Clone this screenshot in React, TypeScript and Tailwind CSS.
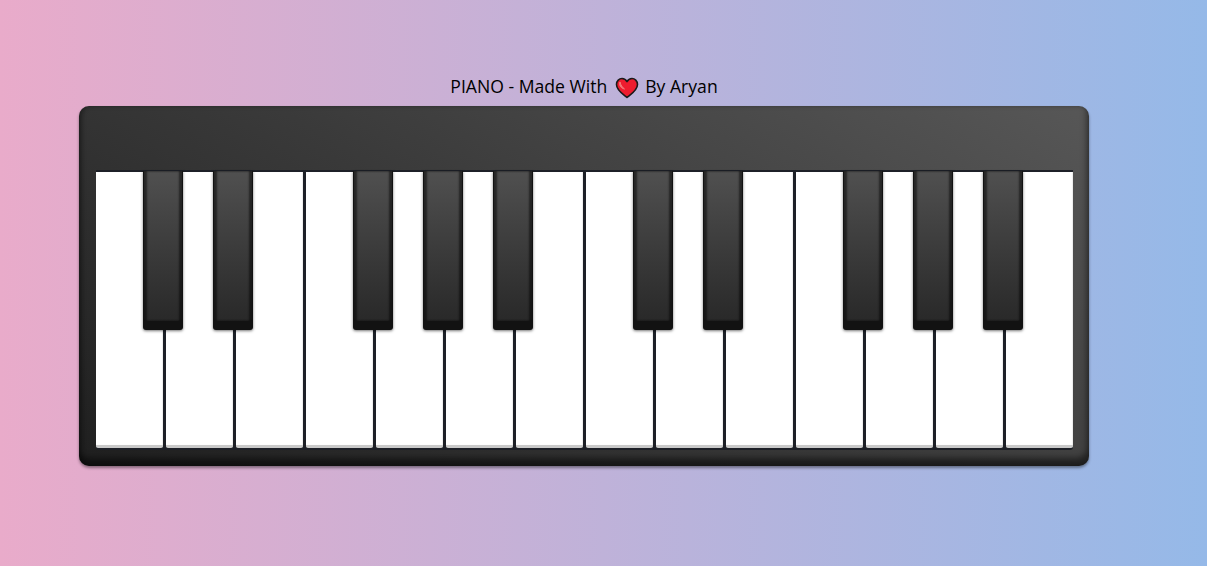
import React from 'react';

// true = this white key has a black key on its right edge
const whiteKeys = [true, true, false, true, true, true, false, true, true, false, true, true, true, false];

function Heart() {
    return (
        <svg width="24" height="22" viewBox="0 0 24 22" className="ml-[8px] mr-[6px] shrink-0">
            <path
                d="M12 20.5 C9 18 1.5 13.5 1.5 7.5 C1.5 3.8 4.3 1.5 7 1.5 C9 1.5 11 2.7 12 4.6 C13 2.7 15 1.5 17 1.5 C19.7 1.5 22.5 3.8 22.5 7.5 C22.5 13.5 15 18 12 20.5 Z"
                fill="#ee1c2e"
                stroke="#1a1a1a"
                strokeWidth="1.6"
                strokeLinejoin="round"
            />
            <path d="M5 5 C5.5 8 7.5 10.5 9.5 12 C6.5 11.5 3.5 8.5 5 5 Z" fill="#f47a7a" stroke="#f47a7a" strokeWidth="1" strokeLinejoin="round" />
        </svg>
    );
}

function BlackKey() {
    return (
        <div className="absolute -top-[1px] -right-[20px] z-10 h-[159px] w-10 rounded-b-[3px] bg-[#121212] shadow-[0_1px_3px_rgba(0,0,0,0.55)]">
            <div className="mx-[1px] h-[150px] bg-gradient-to-b from-[#505050] to-[#292929] shadow-[inset_3px_0_2px_rgba(0,0,0,0.5),inset_-3px_0_2px_rgba(0,0,0,0.5)]" />
        </div>
    );
}

function WhiteKey({ hasBlack }: { hasBlack: boolean }) {
    return (
        <div className="relative h-[276px] w-[67px] shrink-0">
            <div className="h-full rounded-b-[2px] border-b-[3px] border-[#c9c9c9] bg-white shadow-[inset_-1px_0_1px_rgba(0,0,0,0.08)]" />
            {hasBlack && <BlackKey />}
        </div>
    );
}

export default function App() {
    return (
        <div className="h-[566px] w-full overflow-hidden bg-[linear-gradient(to_right,#e9abca,#95b9e8)] pl-[79px] font-['Open_Sans',sans-serif] text-black">
            <div className="flex h-[100px] w-[1010px] items-end justify-center pb-[1px] text-[17.6px] leading-[26px]">
                <span>PIANO - Made With</span>
                <Heart />
                <span>By Aryan</span>
            </div>
            <div className="mt-[6px] h-[360px] w-[1010px] rounded-[10px] bg-[linear-gradient(30deg,#1f1f1f,#3a3a3a_50%,#575757)] pl-[17px] pt-[64px] shadow-[inset_-2px_-8px_6px_rgba(0,0,0,0.5),inset_3px_0_4px_rgba(0,0,0,0.3),0_2px_3px_rgba(0,0,0,0.4)]">
                <div className="flex w-fit gap-[3px] rounded-b-[3px] border-y-[2px] border-[#1d2027] bg-[#1d2027]">
                    {whiteKeys.map((hasBlack, i) => (
                        <WhiteKey key={i} hasBlack={hasBlack} />
                    ))}
                </div>
            </div>
        </div>
    );
}
